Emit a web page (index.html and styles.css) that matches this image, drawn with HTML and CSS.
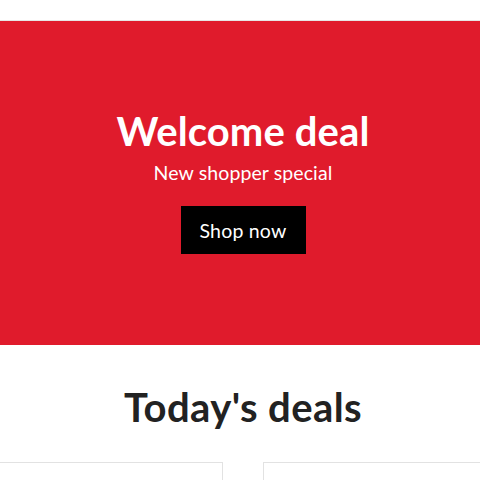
FILE: index.html
```html
<!DOCTYPE html>
<html lang="en">
<head>
  <meta charset="UTF-8">
  <meta name="viewport" content="width=device-width, initial-scale=1.0">
  <title>Welcome deal</title>
  <link rel="stylesheet" href="styles.css">
</head>
<body>
  <div class="topbar"></div>
  <div class="hero">
    <h1 class="hero-title">Welcome deal</h1>
    <p class="hero-sub">New shopper special</p>
    <button class="hero-btn">Shop now</button>
  </div>
  <div class="deals">
    <h2 class="deals-title">Today's deals</h2>
    <div class="deals-track">
      <div class="deal-card"></div>
      <div class="deal-card"></div>
    </div>
  </div>
</body>
</html>
```

FILE: styles.css
```css
body {
  margin: 0;
  padding: 0;
  font-family: Lato, "Noto Sans", sans-serif;
  background-color: #fff;
  overflow: hidden;
}

.topbar {
  height: 20px;
  border-bottom: 1px solid #e6e6e6;
}

.hero {
  background-color: #e01b2c;
  color: #fff;
  height: 324px;
  display: flex;
  flex-direction: column;
  align-items: center;
  box-sizing: border-box;
  padding: 86px 0 0 6px;
}

.hero-title {
  margin: 0;
  font-size: 40px;
  font-weight: 700;
  letter-spacing: 0.1px;
  line-height: 48px;
}

.hero-sub {
  margin: 6px 0 0;
  font-size: 19.5px;
  letter-spacing: 0.1px;
  line-height: 24px;
}

.hero-btn {
  margin-top: 21px;
  width: 125px;
  height: 48px;
  background-color: #000;
  color: #fff;
  border: none;
  font-family: inherit;
  font-size: 19.5px;
  letter-spacing: 0.2px;
  cursor: pointer;
}

.deals-title {
  margin: 0;
  padding: 38px 0 0 6px;
  text-align: center;
  font-size: 40px;
  font-weight: 700;
  letter-spacing: 0.4px;
  line-height: 48px;
  color: #222;
}

.deals-track {
  display: flex;
  gap: 40px;
  margin-top: 31px;
  margin-left: -17px;
}

.deal-card {
  flex: 0 0 240px;
  height: 200px;
  box-sizing: border-box;
  border: 1px solid #e2e2e2;
}
```
